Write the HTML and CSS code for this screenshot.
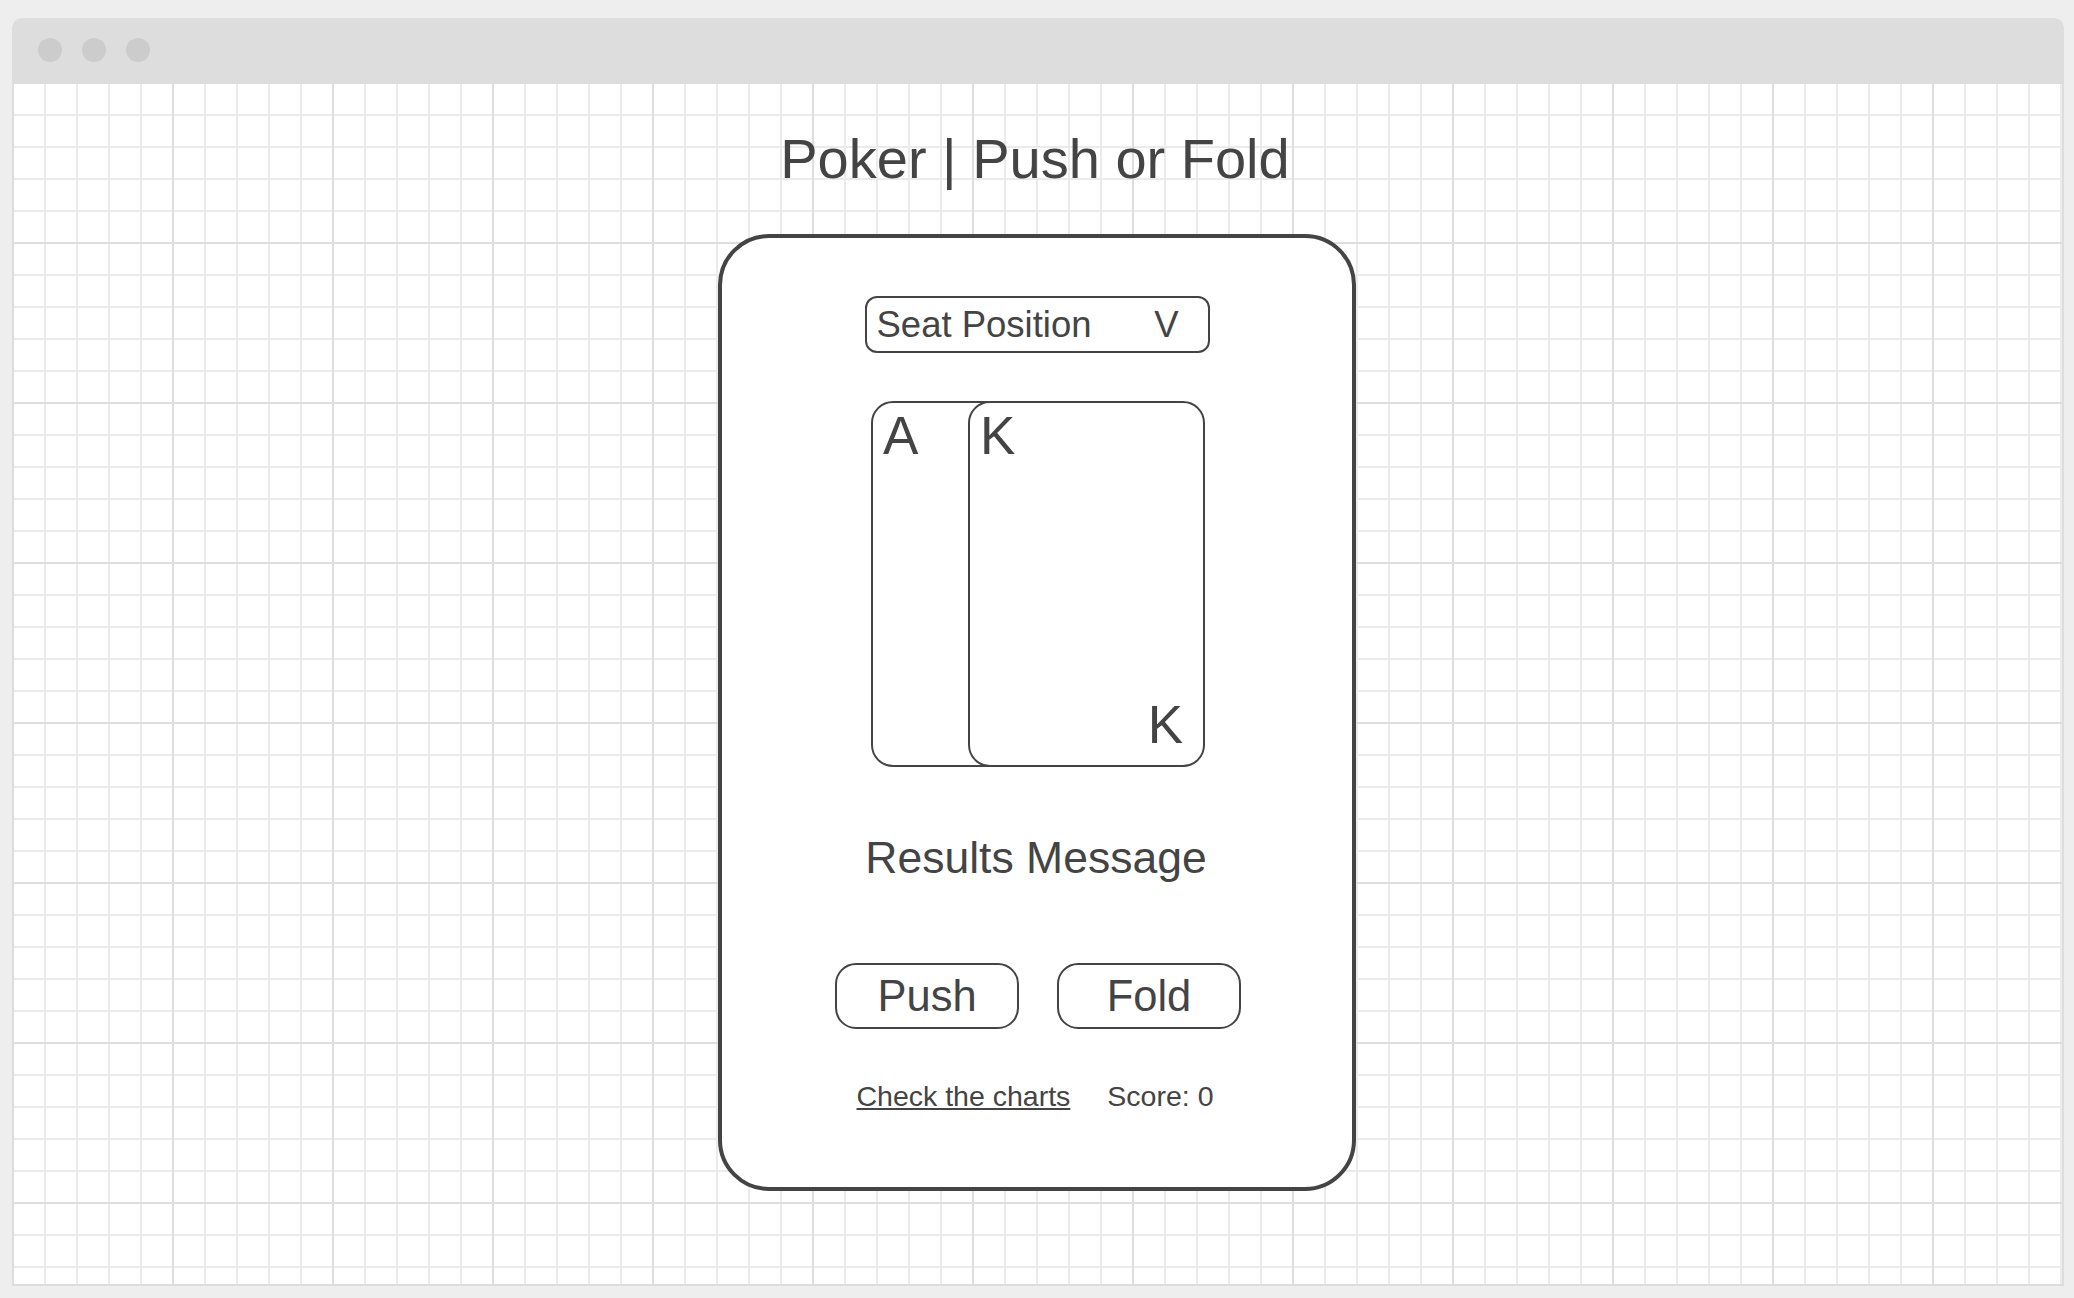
FILE: index.html
```html
<!DOCTYPE html>
<html lang="en">
<head>
<meta charset="utf-8">
<title>Poker | Push or Fold</title>
<link rel="stylesheet" href="styles.css">
</head>
<body>
<div class="page">
  <div class="window">
    <div class="titlebar">
      <span class="dot"></span><span class="dot"></span><span class="dot"></span>
    </div>
    <div class="canvas">
      <h1 class="title">Poker | Push or Fold</h1>
      <div class="panel">
        <div class="select">
          <span class="select-label">Seat Position</span>
          <span class="select-arrow">V</span>
        </div>
        <div class="hand">
          <div class="card">
            <span class="rank">A</span>
          </div>
          <div class="card card-front">
            <span class="rank">K</span>
            <span class="rank rank-bottom">K</span>
          </div>
        </div>
        <div class="results">Results Message</div>
        <div class="actions">
          <button class="btn" type="button">Push</button>
          <button class="btn" type="button">Fold</button>
        </div>
        <div class="footer">
          <a class="charts-link" href="#">Check the charts</a>
          <span class="score">Score: 0</span>
        </div>
      </div>
    </div>
  </div>
</div>
</body>
</html>
```

FILE: styles.css
```css
html, body {
  margin: 0;
  padding: 0;
  background: #eeeeee;
}

body {
  font-family: "Liberation Sans", Arial, sans-serif;
  color: #444444;
}

.page {
  padding: 18px 10px 12px 12px;
  height: 1298px;
  box-sizing: border-box;
}

.window {
  height: 100%;
  display: flex;
  flex-direction: column;
  background: #dddddd;
  border-radius: 10px 10px 0 0;
  padding: 0 2px 2px 2px;
  box-sizing: border-box;
}

.titlebar {
  height: 66px;
  flex: none;
  display: flex;
  align-items: flex-start;
  gap: 20px;
  padding: 20px 0 0 24px;
  box-sizing: border-box;
}

.dot {
  width: 24px;
  height: 24px;
  border-radius: 50%;
  background: #cccccc;
}

.canvas {
  flex: 1;
  display: flex;
  flex-direction: column;
  align-items: center;
  background-color: #ffffff;
  background-image:
    linear-gradient(to right, transparent 158.5px, #dedede 158.5px, #dedede 160px),
    linear-gradient(to bottom, transparent 158.5px, #dedede 158.5px, #dedede 160px),
    linear-gradient(to right, transparent 30.5px, #ebebeb 30.5px, #ebebeb 32px),
    linear-gradient(to bottom, transparent 30.5px, #ebebeb 30.5px, #ebebeb 32px);
  background-size: 160px 160px, 160px 160px, 32px 32px, 32px 32px;
  overflow: hidden;
}

.title {
  margin: 43px 6px 0 0;
  font-size: 56px;
  line-height: 64px;
  font-weight: normal;
  color: #444444;
}

.panel {
  flex: none;
  margin-top: 43px;
  margin-right: 2px;
  width: 638px;
  height: 957px;
  box-sizing: border-box;
  border: 4px solid #444444;
  border-radius: 51px;
  background: #ffffff;
  display: flex;
  flex-direction: column;
  align-items: center;
  padding-top: 58px;
}

.select {
  width: 345px;
  height: 57px;
  box-sizing: border-box;
  border: 2px solid #444444;
  border-radius: 12px;
  display: flex;
  align-items: center;
  justify-content: space-between;
  padding: 0 29px 0 10px;
  font-size: 36.5px;
  line-height: 53px;
}

.hand {
  margin-top: 48px;
  display: flex;
  margin-left: 2px;
}

.card {
  width: 237px;
  height: 366px;
  box-sizing: border-box;
  border: 2px solid #444444;
  border-radius: 22px;
  background: #ffffff;
  display: flex;
  flex-direction: column;
  padding: 6px 20px 14px 10px;
}

.card-front {
  margin-left: -140px;
}

.rank {
  font-size: 53px;
  line-height: 53px;
  align-self: flex-start;
}

.rank-bottom {
  margin-top: auto;
  align-self: flex-end;
}

.results {
  margin-top: 66px;
  margin-right: 2px;
  font-size: 44.5px;
  line-height: 50px;
}

.actions {
  margin-top: 80px;
  margin-left: 2px;
  display: flex;
  gap: 38px;
}

.btn {
  width: 184px;
  height: 66px;
  box-sizing: border-box;
  border: 2px solid #444444;
  border-radius: 21px;
  background: #ffffff;
  font-family: "Liberation Sans", Arial, sans-serif;
  font-size: 43.5px;
  line-height: 62px;
  color: #444444;
  padding: 0;
}

.footer {
  margin-top: 50px;
  display: flex;
  gap: 37px;
  font-size: 28.5px;
  line-height: 34px;
  margin-right: 4px;
}

.charts-link {
  color: #444444;
  text-decoration: underline;
}

.score {
  color: #444444;
}
```
